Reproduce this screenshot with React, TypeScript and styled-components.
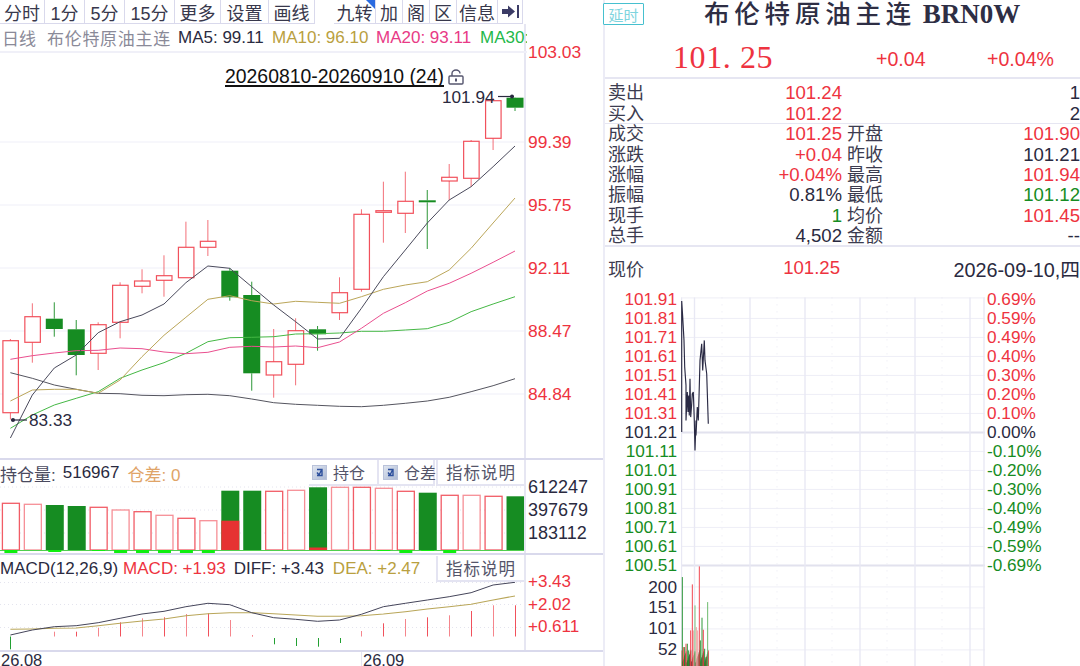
import React from 'react';
import styled, { createGlobalStyle } from 'styled-components';

const RED = '#ee3340';
const GREEN = '#168c22';
const INK = '#2a2a40';
const LINE = '#e6e6f2';
const EDGE = '#d9d9ec';
const SANS = '"Liberation Sans", "Noto Sans CJK SC", sans-serif';

const Global = createGlobalStyle`
  html, body { margin: 0; padding: 0; background: #fff; }
  body { font-family: ${SANS}; color: ${INK}; }
`;

const Page = styled.div`
  width: 1080px; height: 666px; overflow: hidden; display: flex; background: #fff;
`;
const LeftPanel = styled.div`
  width: 603px; flex: none; display: flex; flex-direction: column;
`;
const Toolbar = styled.div`
  width: 525px; height: 24px; display: flex; box-sizing: border-box;
`;
const ToolGroup = styled.div<{ $gap?: boolean }>`
  display: flex; margin-left: ${p => (p.$gap ? '19px' : '0')};
`;
const ToolButton = styled.div<{ $w: number }>`
  position: relative; width: ${p => p.$w}px; height: 24px; box-sizing: border-box;
  border-right: 1px solid ${EDGE}; border-bottom: 1px solid ${EDGE};
  display: flex; align-items: center; justify-content: center;
  font-size: 18px; color: #38384c; white-space: nowrap;
`;
const CornerFlag = styled.span`
  position: absolute; right: 0; top: 0; width: 0; height: 0;
  border-top: 9px solid #2a6be0; border-left: 9px solid transparent;
`;

const TopSection = styled.div`
  display: flex; height: 434px; flex: none; border-bottom: 2px solid ${EDGE};
`;
const MainColumn = styled.div`
  width: 526px; flex: none; box-sizing: border-box; border-right: 2px solid ${LINE};
  display: flex; flex-direction: column;
`;
const InfoRow = styled.div`
  height: 29px; flex: none; box-sizing: border-box; border-bottom: 2px solid #f0f0f8;
  display: flex; align-items: center; overflow: hidden; white-space: nowrap;
  font-size: 17px; padding-left: 2px; width: 527px;
`;
const InfoText = styled.span<{ $c: string; $w: number; $track?: number }>`
  color: ${p => p.$c}; flex: none; width: ${p => p.$w}px;
  letter-spacing: ${p => p.$track ?? 0}px;
`;
const ChartCanvas = styled.div`
  position: relative; flex: 1; min-height: 0;
`;
const ChartSvg = styled.svg`
  display: block; position: absolute; left: 0; top: 0;
`;
const RangeLabel = styled.span`
  position: absolute; left: 225px; top: 12px; font-size: 19.4px; line-height: 22px;
  color: #111; border-bottom: 2px solid #111; white-space: nowrap; height: 20px;
`;
const LockMark = styled.svg`
  position: absolute; left: 448px; top: 16px;
`;
const PriceTag = styled.span<{ $x: number; $y: number }>`
  position: absolute; left: ${p => p.$x}px; top: ${p => p.$y}px;
  font-size: 17.2px; line-height: 20px; color: ${INK};
`;
const PriceAxis = styled.div`
  flex: 1; display: flex; flex-direction: column; gap: 43px; padding: 18px 0 0 2px;
`;
const AxisLabel = styled.div<{ $first?: boolean; $c?: string; $size?: number }>`
  height: 20px; line-height: 20px; font-size: ${p => p.$size ?? 17.4}px;
  color: ${p => p.$c ?? RED};
  margin-bottom: ${p => (p.$first ? '27px' : '0')};
`;

const SubPanel = styled.div`
  display: flex; flex: none; border-bottom: 2px solid ${EDGE};
`;
const SubMain = styled.div`
  width: 526px; flex: none; box-sizing: border-box; border-right: 2px solid ${LINE};
  display: flex; flex-direction: column;
`;
const SubHeader = styled.div<{ $h: number }>`
  height: ${p => p.$h}px; flex: none; display: flex; align-items: center; white-space: nowrap;
  font-size: 17px;
`;
const HeaderText = styled.span<{ $c: string; $ml?: number }>`
  color: ${p => p.$c}; margin-left: ${p => p.$ml ?? 0}px;
`;
const HeaderSpacer = styled.span`
  flex: 1;
`;
const CheckCell = styled.div<{ $w: number; $pad: number }>`
  width: ${p => p.$w}px; height: 26px; flex: none; box-sizing: border-box; display: flex;
  align-items: center; gap: 6px; padding-left: ${p => p.$pad}px; font-size: 16px; color: #55556a;
  border-right: 2px solid #e4e4f2; border-bottom: 2px solid #e4e4f2;
`;
const CheckBox = styled.span`
  width: 15px; height: 15px; flex: none; box-sizing: border-box;
  border: 1px solid #b9c2da; background: linear-gradient(135deg, #dfe5f0, #aebbd4);
  display: flex; align-items: center; justify-content: center;
`;
const HelpButton = styled.div`
  width: 88px; height: 26px; flex: none; box-sizing: border-box; margin-left: 1px;
  border-left: 2px solid #e4e4f2; border-bottom: 2px solid #e4e4f2;
  display: flex; align-items: center; justify-content: center;
  font-size: 16.5px; color: #55556a; letter-spacing: 1px; background: #fff;
`;
const SubAxis = styled.div<{ $top: number; $gap: number }>`
  flex: 1; display: flex; flex-direction: column; padding: ${p => p.$top}px 0 0 2px;
  gap: ${p => p.$gap}px;
`;
const SubChart = styled.svg`
  display: block;
`;
const DateRow = styled.div`
  width: 526px; flex: 1; min-height: 0; display: flex;
  font-size: 16.5px; line-height: 16px; overflow: hidden; color: ${INK};
`;
const DateText = styled.span<{ $w: number }>`
  width: ${p => p.$w}px; flex: none; box-sizing: border-box; padding-left: 1px;
`;
const DateTick = styled.span`
  padding-left: 1px; border-left: 1px solid ${LINE};
`;

const RightPanel = styled.div`
  flex: 1; box-sizing: border-box; border-left: 2px solid #ececf6; display: flex;
  flex-direction: column; min-width: 0;
`;
const TitleBar = styled.div`
  height: 33px; flex: none; display: flex; align-items: flex-start; margin-left: -2px;
`;
const DelayBadge = styled.div`
  width: 41px; height: 22px; margin-top: 3px; flex: none; box-sizing: border-box;
  border: 1px solid #46c0cf; border-radius: 1px; display: flex; align-items: center;
  justify-content: center; font-size: 15px; color: #7dd4de; background: #fff;
`;
const Title = styled.div`
  margin-left: 60px; font-size: 25.5px; line-height: 29px; letter-spacing: 4.8px; color: #2e2e44;
  white-space: nowrap; font-weight: 500; font-family: "Liberation Serif", "Noto Sans CJK SC", serif;
`;
const TitleCode = styled.span`
  font-weight: 700; font-size: 27px; letter-spacing: 0;
  font-family: "Liberation Serif", serif;
`;
const PriceRow = styled.div`
  height: 46px; flex: none; box-sizing: border-box; border-bottom: 2px solid ${LINE};
  display: grid; grid-template-columns: 203px 111px 1fr; padding-left: 68px; align-items: center;
`;
const BigPrice = styled.div`
  font-family: "Liberation Serif", serif; font-size: 32px; color: ${RED}; white-space: pre;
  letter-spacing: 0.6px; line-height: 46px; padding-top: 1px;
`;
const ChangeText = styled.div`
  font-size: 19.6px; color: ${RED}; padding-top: 5px;
`;
const QuoteBlock = styled.div<{ $line?: boolean }>`
  display: grid; grid-template-columns: 38px 196px 38px 1fr; grid-auto-rows: 20.4px;
  padding-left: 3px; line-height: 20.4px;
  border-top: ${p => (p.$line ? `1px solid ${LINE}` : 'none')};
  padding-top: ${p => (p.$line ? '0' : '4.4px')};
  margin-top: ${p => (p.$line ? '-1px' : '0')};
`;
const QLabel = styled.div<{ $second?: boolean }>`
  font-size: 18px; color: #3c3c50; white-space: nowrap;
  margin-left: ${p => (p.$second ? '5px' : '0')};
`;
const QValue = styled.div<{ $c?: string; $size?: number }>`
  text-align: right; color: ${p => p.$c ?? INK}; white-space: nowrap;
  font-size: ${p => p.$size ?? 18.6}px;
`;
const NowRow = styled.div`
  height: 45px; flex: none; box-sizing: border-box; border-top: 2px solid ${LINE};
  display: grid; grid-template-columns: 38px 194px 1fr; align-items: center; padding-left: 3px;
  margin-top: -2px;
`;
const TickArea = styled.div`
  flex: 1; display: flex; min-height: 0;
`;
const TickLeftAxis = styled.div`
  width: 76px; flex: none; box-sizing: border-box; padding-right: 4px; text-align: right;
`;
const TickLabel = styled.div<{ $c: string; $h?: number }>`
  height: ${p => p.$h ?? 19}px; line-height: ${p => p.$h ?? 19}px; font-size: 17.2px;
  color: ${p => p.$c};
`;
const VolumeLabels = styled.div`
  margin-top: 2px;
`;
const TickRightAxis = styled.div`
  flex: 1; padding-left: 2px;
`;
const TickSvg = styled.svg`
  display: block; flex: none;
`;

/* ---------- chart data, in page coordinates ---------- */
const cx = (i: number) => 10.4 + 21.94 * i;
type Candle = [number, number, number, number, 0 | 1];
const candles: Candle[] = [
  [339, 340.7, 412.7, 419.5, 1], [303.3, 316.7, 342.3, 362.7, 1], [302.3, 318.7, 329, 336.7, 0],
  [320, 329.3, 355, 375.3, 0], [322.3, 324.7, 353.3, 370, 1], [282.3, 285.3, 322.3, 338.3, 1],
  [269.3, 281, 286.3, 293.3, 1], [255.3, 275.7, 280.3, 296.7, 1], [221.7, 247.3, 277.7, 277.7, 1],
  [220, 241.3, 247.3, 256, 1], [268, 270.7, 297.3, 300.7, 0], [281.7, 295, 373.3, 390.7, 0],
  [329, 361.7, 375, 397.7, 1], [318.3, 330.7, 364.3, 385.3, 1], [326, 329.3, 334.3, 350.7, 0],
  [277.3, 292.7, 312.7, 320, 1], [209.3, 214.3, 289.3, 291.7, 1], [181.7, 210.7, 212.3, 242.7, 1],
  [171.7, 201.3, 213.3, 233, 1], [190, 200.3, 202.3, 249, 0], [164, 177.3, 181, 200, 1],
  [140, 141.3, 178.3, 186.7, 1], [98, 100.7, 138.3, 150, 1], [98, 97.7, 107.7, 111, 0],
];
const ma5 = [438, 395, 368, 355, 332.7, 321.7, 315, 304, 282.7, 266, 268.3, 286.7, 305, 321.7, 339, 338.3, 308.3, 276.7, 250, 223, 200, 186.7, 166.7, 146];
const ma10 = [401, 390, 389.3, 389.3, 393.3, 380, 356.7, 335.3, 317.3, 299.3, 295.7, 300.7, 304, 301.3, 302.3, 303.3, 296.7, 289.3, 285, 281.7, 270, 248.3, 223, 198];
const ma20 = [359.3, 355.7, 353, 350.7, 350.3, 348, 348.7, 352, 353.7, 352.3, 347.3, 346.3, 347, 346, 347.7, 342, 328.3, 313.3, 302.7, 291, 283.3, 273.3, 262.3, 251];
const ma30 = [428.3, 415, 405, 398.3, 391.7, 378.3, 370, 362.7, 353.3, 341.7, 337.7, 337.3, 336.7, 334, 333.7, 333, 331.3, 331.3, 330, 328.7, 322.3, 311.7, 304, 296.7];
const ma60 = [372.7, 378.3, 385, 389.3, 393.3, 393.7, 395.3, 395.7, 394.7, 394.3, 395.7, 399, 402.7, 404.3, 405.3, 406.3, 406.7, 405.3, 403.3, 401, 397.3, 391.7, 385.7, 378.7];
const maLines: [number[], string][] = [
  [ma60, '#55555f'], [ma30, '#45b845'], [ma20, '#ea4f8f'], [ma10, '#bba659'], [ma5, '#4a4a5c'],
];
const toPts = (ys: number[]) => ys.map((y, i) => `${cx(i).toFixed(1)},${y}`).join(' ');

const oiTops = [503.3, 504.3, 505, 506, 507.3, 510, 511.7, 515.3, 518.3, 520.7, 490.7, 490.7, 491.3, 490.3, 487.3, 487.3, 487.3, 488.3, 491.3, 492.7, 495.3, 495.3, 496.3, 496.3];
const oiGreen = [2, 3, 10, 11, 14, 19, 23];
const oiLime: [number, number][] = [[0, 3], [2, 2], [4, 1], [5, 3], [6, 3], [7, 3], [8, 3], [9, 3], [17, 1], [18, 3], [19, 1], [20, 3]];

const macdBars: [number, number, 0 | 1][] = [
  [0, 649.3, 0], [2, 631.7, 1], [3, 631.7, 1], [4, 627.7, 1], [5, 622.3, 1], [6, 618.3, 1], [7, 617.3, 1],
  [8, 614, 1], [9, 613.3, 1], [10, 620, 1], [11, 635.3, 1], [12, 644.3, 0], [13, 646, 0], [14, 646.7, 0],
  [15, 643, 0], [16, 631, 1], [17, 623.3, 1], [18, 619, 1], [19, 617.3, 1], [20, 615.3, 1], [21, 611, 1],
  [22, 605.3, 1], [23, 605.3, 1],
];
const diff = [635, 630, 626.7, 625.7, 622.7, 618.3, 614, 611.3, 606.7, 603.3, 604.7, 612.7, 617.7, 619.3, 621.3, 620, 614.3, 606.7, 603.3, 600, 596.7, 592.7, 585, 582.3];
const dea = [629.3, 629, 628.3, 628, 625.7, 623.3, 621, 619, 615.7, 613.7, 612.7, 612.7, 613.7, 615, 616.3, 616.3, 615.7, 614, 611.7, 609, 606.7, 604.3, 600, 596];

const tickZoom: [number, number][] = [
  [245, 455], [245, 62], [248, 110], [252, 180], [254, 260], [258, 315], [258, 420], [262, 335], [264, 395], [266, 345],
  [268, 405], [270, 295], [272, 410], [275, 370], [277, 340], [280, 335], [283, 420], [285, 510], [288, 420], [288, 465],
  [292, 380], [295, 420], [297, 350], [300, 240], [305, 190], [308, 270], [313, 180], [315, 240], [320, 280], [325, 430],
];
const tickPts = tickZoom.map(([x, y]) => `${(x / 3 + 600).toFixed(1)},${(y / 3 + 280).toFixed(1)}`).join(' ');
const volZoom: [number, number, string][] = [
  [247, 890, GREEN], [250, 1100, RED], [254, 1100, GREEN], [258, 1090, RED], [262, 1090, GREEN], [266, 1110, GREEN],
  [272, 1050, RED], [277, 912, RED], [281, 1050, '#f09a9a'], [285, 975, '#6dbb6d'], [289, 1040, '#f09a9a'],
  [293, 1050, '#f09a9a'], [298, 858, RED], [301, 1080, GREEN], [306, 1012, GREEN], [310, 1048, RED],
  [314, 1105, GREEN], [318, 1130, GREEN], [323, 965, '#5cb35c'],
];

const priceLabels = ['103.03', '99.39', '95.75', '92.11', '88.47', '84.84'];
const tickPrices = ['101.91', '101.81', '101.71', '101.61', '101.51', '101.41', '101.31', '101.21', '101.11', '101.01', '100.91', '100.81', '100.71', '100.61', '100.51'];
const tickPct = ['0.69%', '0.59%', '0.49%', '0.40%', '0.30%', '0.20%', '0.10%', '0.00%', '-0.10%', '-0.20%', '-0.30%', '-0.40%', '-0.49%', '-0.59%', '-0.69%'];
const toneOf = (i: number) => (i < 7 ? RED : i === 7 ? INK : GREEN);

const toolsA: [string, number][] = [['分时', 45], ['1分', 40], ['5分', 40], ['15分', 50], ['更多', 46], ['设置', 48], ['画线', 46]];
const toolsB: [string, number][] = [['九转', 42], ['加', 27], ['阁', 27], ['区', 27], ['信息', 41]];

const quoteRows: [string, string, string | undefined, string, string, string | undefined][] = [
  ['成交', '101.25', RED, '开盘', '101.90', RED],
  ['涨跌', '+0.04', RED, '昨收', '101.21', INK],
  ['涨幅', '+0.04%', RED, '最高', '101.94', RED],
  ['振幅', '0.81%', INK, '最低', '101.12', GREEN],
  ['现手', '1', GREEN, '均价', '101.45', RED],
  ['总手', '4,502', INK, '金额', '--', INK],
];

const TickCheck = () => (
  <svg width="11" height="11" viewBox="0 0 11 11">
    <path d="M3 2.5 H8 V8.5 H3 M3 5.5 L5 8 L8 2" fill="none" stroke="#2c4f9c" strokeWidth="1.4" />
  </svg>
);

export default function App() {
  return (
    <Page>
      <Global />
      <LeftPanel>
        <Toolbar>
          <ToolGroup>
            {toolsA.map(([t, w]) => <ToolButton key={t} $w={w}>{t}</ToolButton>)}
          </ToolGroup>
          <ToolGroup $gap>
            {toolsB.map(([t, w], i) => (
              <ToolButton key={t} $w={w}>{t}{i === 0 && <CornerFlag />}</ToolButton>
            ))}
            <ToolButton $w={25}>
              <svg width="17" height="13" viewBox="0 0 17 13">
                <path d="M0 4 H6 V0.5 L13 6.5 L6 12.5 V9 H0 Z" fill="#3c3c66" />
                <rect x="15" y="0" width="2" height="13" fill="#3c3c66" />
              </svg>
            </ToolButton>
          </ToolGroup>
        </Toolbar>

        <TopSection>
          <MainColumn>
            <InfoRow>
              <InfoText $c="#8a8a98" $w={45}>日线</InfoText>
              <InfoText $c="#8a8a98" $w={131} $track={0.7}>布伦特原油主连</InfoText>
              <InfoText $c={INK} $w={94}>MA5: 99.11</InfoText>
              <InfoText $c="#b9a040" $w={104}>MA10: 96.10</InfoText>
              <InfoText $c="#e83a86" $w={104}>MA20: 93.11</InfoText>
              <InfoText $c="#1fb84a" $w={50}>MA30:</InfoText>
            </InfoRow>
            <ChartCanvas>
              <ChartSvg width="524" height="405" viewBox="0 53 524 405">
                {[142, 205, 268, 331, 394].map(y => (
                  <line key={y} x1="0" x2="524" y1={y} y2={y} stroke="#efeff8" strokeWidth="1" />
                ))}
                {candles.map(([hi, top, bot, lo, up], i) => {
                  const c = up ? RED : GREEN;
                  const x = cx(i);
                  return (
                    <g key={i}>
                      <line x1={x} x2={x} y1={hi} y2={top} stroke={c} strokeOpacity={up ? 0.7 : 0.9} />
                      <line x1={x} x2={x} y1={bot} y2={lo} stroke={c} strokeOpacity={up ? 0.7 : 0.9} />
                      {up ? (
                        <rect x={x - 7.5} y={top} width="15.5" height={bot - top} fill="#fff" stroke={c} strokeOpacity={0.85} strokeWidth="1.2" />
                      ) : (
                        <rect x={x - 8.5} y={top} width="17" height={bot - top} fill="#168c22" />
                      )}
                    </g>
                  );
                })}
                {maLines.map(([ys, c]) => (
                  <polyline key={c} points={toPts(ys)} fill="none" stroke={c} strokeWidth="1" />
                ))}
                <line x1="498" x2="514" y1="96.5" y2="96.5" stroke="#2a2a40" strokeWidth="1.2" />
                <circle cx="512" cy="96.5" r="2" fill="#2a2a40" />
                <line x1="11" x2="27" y1="420" y2="420" stroke="#2a2a40" strokeWidth="1.2" />
                <circle cx="13" cy="420" r="2" fill="#2a2a40" />
              </ChartSvg>
              <RangeLabel>20260810-20260910 (24)</RangeLabel>
              <LockMark width="16" height="16" viewBox="0 0 16 16">
                <path d="M4 7 V4.5 A4 3.5 0 0 1 12 4.5" fill="none" stroke="#55556e" strokeWidth="1.4" />
                <rect x="1" y="7" width="14" height="8" rx="1" fill="none" stroke="#55556e" strokeWidth="1.4" />
                <rect x="7" y="9.5" width="2" height="3" fill="#55556e" />
              </LockMark>
              <PriceTag $x={442} $y={34}>101.94</PriceTag>
              <PriceTag $x={29} $y={357}>83.33</PriceTag>
            </ChartCanvas>
          </MainColumn>
          <PriceAxis>
            {priceLabels.map((t, i) => <AxisLabel key={t} $first={i === 0}>{t}</AxisLabel>)}
          </PriceAxis>
        </TopSection>

        <SubPanel>
          <SubMain>
            <SubHeader $h={26}>
              <HeaderText $c="#4a4a5e">持仓量:</HeaderText>
              <HeaderText $c={INK} $ml={7}>516967</HeaderText>
              <HeaderText $c="#e0a468" $ml={8}>仓差: 0</HeaderText>
              <HeaderSpacer />
              <CheckCell $w={70} $pad={3}><CheckBox><TickCheck /></CheckBox>持仓</CheckCell>
              <CheckCell $w={56} $pad={4}><CheckBox><TickCheck /></CheckBox>仓差</CheckCell>
              <HelpButton>指标说明</HelpButton>
            </SubHeader>
            <SubChart width="524" height="67" viewBox="0 486 524 67">
              {[487, 510, 533].map(y => (
                <line key={y} x1="0" x2="524" y1={y} y2={y} stroke="#e4e4ee" strokeDasharray="1 3" />
              ))}
              {oiTops.map((top, i) => {
                const x = cx(i) - 8.5;
                const g = oiGreen.includes(i);
                return g ? (
                  <rect key={i} x={x} y={top} width="18" height={550 - top} fill="#168c22" />
                ) : (
                  <rect key={i} x={x + 0.5} y={top} width="17" height={550 - top} fill="#fff" stroke={RED} strokeOpacity={i % 2 ? 0.55 : 0.8} strokeWidth="1.3" />
                );
              })}
              <rect x={cx(10) - 8.5} y="520.7" width="18" height="29.3" fill="#e63232" />
              <rect x={cx(14) - 8.5} y="547.5" width="18" height="2.5" fill="#e63232" />
              <line x1="0" x2="524" y1="550.5" y2="550.5" stroke="#4fcf4f" />
              {oiLime.map(([i, h]) => (
                <rect key={i} x={cx(i) - 6} y="550" width="13" height={h} fill="#10ee10" />
              ))}
            </SubChart>
          </SubMain>
          <SubAxis $top={17} $gap={3}>
            <AxisLabel $c={INK} $size={18}>612247</AxisLabel>
            <AxisLabel $c={INK} $size={18}>397679</AxisLabel>
            <AxisLabel $c={INK} $size={18}>183112</AxisLabel>
          </SubAxis>
        </SubPanel>

        <SubPanel>
          <SubMain>
            <SubHeader $h={27}>
              <HeaderText $c={INK}>MACD(12,26,9)</HeaderText>
              <HeaderText $c={RED} $ml={5}>MACD: +1.93</HeaderText>
              <HeaderText $c={INK} $ml={8}>DIFF: +3.43</HeaderText>
              <HeaderText $c="#b9a040" $ml={9}>DEA: +2.47</HeaderText>
              <HeaderSpacer />
              <HelpButton>指标说明</HelpButton>
            </SubHeader>
            <SubChart width="524" height="68" viewBox="0 582 524 68">
              {[582.5, 604.5, 627.5].map(y => (
                <line key={y} x1="0" x2="524" y1={y} y2={y} stroke="#e4e4ee" strokeDasharray="1 3" />
              ))}
              {macdBars.map(([i, y, up]) => {
                const x = Math.round(cx(i)) + 0.5;
                return up ? (
                  <line key={i} x1={x} x2={x} y1={y} y2={636.5} stroke={RED} strokeOpacity={i % 2 ? 0.85 : 0.6} />
                ) : (
                  <line key={i} x1={x} x2={x} y1={i === 0 ? 636.5 : 638} y2={y} stroke="#22a032" />
                );
              })}
              <polyline points={toPts(dea)} fill="none" stroke="#b9a659" strokeWidth="1.1" />
              <polyline points={toPts(diff)} fill="none" stroke="#45455a" strokeWidth="1" />
            </SubChart>
          </SubMain>
          <SubAxis $top={17} $gap={2.5}>
            <AxisLabel $size={17}>+3.43</AxisLabel>
            <AxisLabel $size={17}>+2.02</AxisLabel>
            <AxisLabel $size={17}>+0.611</AxisLabel>
          </SubAxis>
        </SubPanel>

        <DateRow>
          <DateText $w={361}>26.08</DateText>
          <DateTick>26.09</DateTick>
        </DateRow>
      </LeftPanel>

      <RightPanel>
        <TitleBar>
          <DelayBadge>延时</DelayBadge>
          <Title>布伦特原油主连<TitleCode> BRN0W</TitleCode></Title>
        </TitleBar>
        <PriceRow>
          <BigPrice>101. 25</BigPrice>
          <ChangeText>+0.04</ChangeText>
          <ChangeText>+0.04%</ChangeText>
        </PriceRow>
        <QuoteBlock>
          <QLabel>卖出</QLabel><QValue $c={RED}>101.24</QValue><QLabel $second /><QValue>1</QValue>
          <QLabel>买入</QLabel><QValue $c={RED}>101.22</QValue><QLabel $second /><QValue>2</QValue>
        </QuoteBlock>
        <QuoteBlock $line>
          {quoteRows.map(([a, b, bc, c, d, dc]) => (
            <React.Fragment key={a}>
              <QLabel>{a}</QLabel><QValue $c={bc}>{b}</QValue>
              <QLabel $second>{c}</QLabel><QValue $c={dc}>{d}</QValue>
            </React.Fragment>
          ))}
        </QuoteBlock>
        <NowRow>
          <QLabel>现价</QLabel>
          <QValue $c={RED}>101.25</QValue>
          <QValue $size={19.8}>2026-09-10,四</QValue>
        </NowRow>
        <TickArea>
          <TickLeftAxis>
            {tickPrices.map((t, i) => <TickLabel key={t} $c={toneOf(i)}>{t}</TickLabel>)}
            <VolumeLabels>
              {['200', '151', '101', '52'].map(t => <TickLabel key={t} $c={INK} $h={20.7}>{t}</TickLabel>)}
            </VolumeLabels>
          </TickLeftAxis>
          <TickSvg width="304" height="377" viewBox="681 289.6 304 377">
            {Array.from({ length: 15 }, (_, i) => 299 + i * 19).map((y, i) => (
              <line key={y} x1="681" x2="985" y1={i === 0 ? 297.5 : y} y2={i === 0 ? 297.5 : y} stroke={i === 7 || i === 14 ? '#e2e2ee' : '#eeeef6'} strokeWidth={i === 7 || i === 14 ? 2 : 1} />
            ))}
            {[586.5, 607.5, 628.5, 649.5].map(y => (
              <line key={y} x1="681" x2="985" y1={y} y2={y} stroke="#eeeef6" />
            ))}
            {[722, 777, 832, 887, 942].map(x => (
              <line key={x} x1={x} x2={x} y1="297" y2="666" stroke="#e8e8f2" strokeDasharray="1 6" />
            ))}
            {[681.5, 694.5, 750, 805, 860, 915, 970, 984].map(x => (
              <line key={x} x1={x} x2={x} y1="297" y2="666" stroke="#e8e8f4" strokeWidth="1.4" />
            ))}
            <polyline points={tickPts} fill="none" stroke="#2a2a44" strokeWidth="1.15" strokeLinejoin="bevel" />
            {Array.from({ length: 40 }, (_, i) => {
              const x = 682 + i * 0.68;
              const top = 650 + ((i * 37) % 13);
              return <line key={i} x1={x} x2={x} y1={top} y2="666" stroke={i % 3 === 0 ? RED : i % 3 === 1 ? '#1b6e22' : '#2a2a2a'} strokeWidth="0.8" />;
            })}
            {volZoom.map(([x, y, c], i) => {
              const px = x / 3 + 600;
              return <line key={i} x1={px} x2={px} y1={y / 3 + 280} y2="666" stroke={c} strokeWidth="0.9" />;
            })}
          </TickSvg>
          <TickRightAxis>
            {tickPct.map((t, i) => <TickLabel key={t} $c={toneOf(i)}>{t}</TickLabel>)}
          </TickRightAxis>
        </TickArea>
      </RightPanel>
    </Page>
  );
}
